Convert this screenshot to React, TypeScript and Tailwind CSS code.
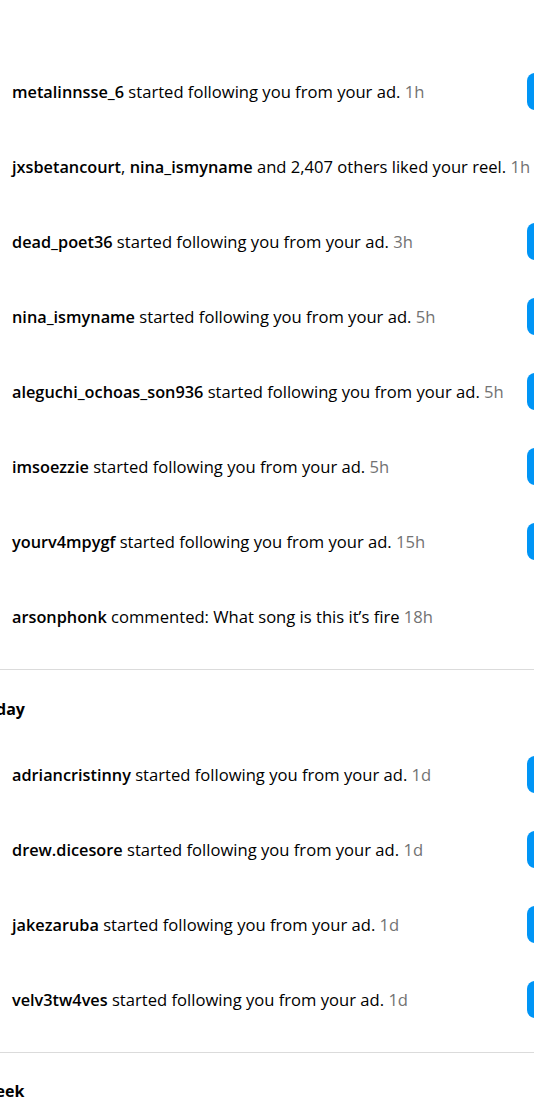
import React from "react";

type Part = { t: string; b?: boolean };
type Row = { parts: Part[]; time: string; button: boolean };

const today: Row[] = [
  { parts: [{ t: "metalinnsse_6", b: true }, { t: " started following you from your ad." }], time: "1h", button: true },
  { parts: [{ t: "jxsbetancourt", b: true }, { t: ", " }, { t: "nina_ismyname", b: true }, { t: " and 2,407 others liked your reel." }], time: "1h", button: false },
  { parts: [{ t: "dead_poet36", b: true }, { t: " started following you from your ad." }], time: "3h", button: true },
  { parts: [{ t: "nina_ismyname", b: true }, { t: " started following you from your ad." }], time: "5h", button: true },
  { parts: [{ t: "aleguchi_ochoas_son936", b: true }, { t: " started following you from your ad." }], time: "5h", button: true },
  { parts: [{ t: "imsoezzie", b: true }, { t: " started following you from your ad." }], time: "5h", button: true },
  { parts: [{ t: "yourv4mpygf", b: true }, { t: " started following you from your ad." }], time: "15h", button: true },
  { parts: [{ t: "arsonphonk", b: true }, { t: " commented: What song is this it\u2019s fire" }], time: "18h", button: false },
];

const yesterday: Row[] = [
  { parts: [{ t: "adriancristinny", b: true }, { t: " started following you from your ad." }], time: "1d", button: true },
  { parts: [{ t: "drew.dicesore", b: true }, { t: " started following you from your ad." }], time: "1d", button: true },
  { parts: [{ t: "jakezaruba", b: true }, { t: " started following you from your ad." }], time: "1d", button: true },
  { parts: [{ t: "velv3tw4ves", b: true }, { t: " started following you from your ad." }], time: "1d", button: true },
];

function NotifRow({ row }: { row: Row }) {
  return (
    <div className="flex h-[75px] items-center">
      <div className="min-w-0 flex-1 whitespace-nowrap pl-[12px] text-[16.6px] leading-[20px] text-black">
        {row.parts.map((p, i) =>
          p.b ? (
            <span key={i} className="text-[16.3px] font-semibold">
              {p.t}
            </span>
          ) : (
            <span key={i}>{p.t}</span>
          )
        )}{" "}
        <span className="text-[#737373]">{row.time}</span>
      </div>
      {row.button ? (
        <div className="absolute left-[527px] h-[37px] w-[96px] rounded-[8px] bg-[#0095f6]" />
      ) : null}
    </div>
  );
}

export default function App() {
  return (
    <div
      className="relative h-[1110px] w-[534px] overflow-hidden bg-white"
      style={{ fontFamily: '"Open Sans", "Noto Sans", sans-serif' }}
    >
      <div className="h-[54px]" />
      {today.map((r, i) => (
        <NotifRow key={i} row={r} />
      ))}
      <div className="mt-[15px] border-t border-[#dbdbdb]" />
      <div className="ml-[-55px] whitespace-nowrap pt-[29px] pb-[18px] text-[16px] font-bold leading-[20px] text-black">
        Yesterday
      </div>
      {yesterday.map((r, i) => (
        <NotifRow key={i} row={r} />
      ))}
      <div className="mt-[15px] border-t border-[#dbdbdb]" />
      <div className="ml-[-55px] whitespace-nowrap pt-[28px] text-[16px] font-bold leading-[20px] text-black">
        This week
      </div>
    </div>
  );
}
